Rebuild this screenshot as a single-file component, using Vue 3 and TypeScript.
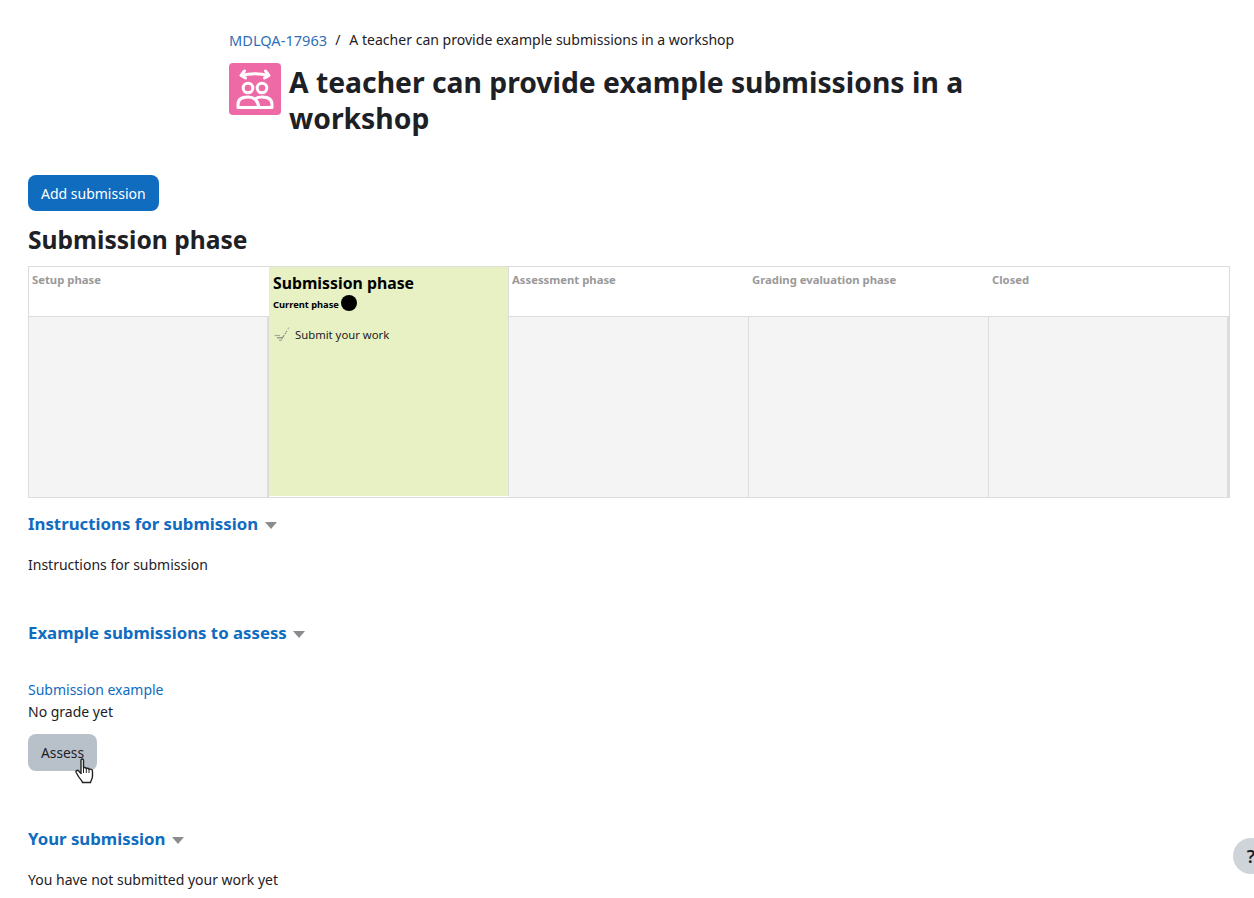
<script setup lang="ts">
type Phase = {
  title: string;
  current?: boolean;
};

const phases: Phase[] = [
  { title: 'Setup phase' },
  { title: 'Submission phase', current: true },
  { title: 'Assessment phase' },
  { title: 'Grading evaluation phase' },
  { title: 'Closed' },
];
</script>

<template>
  <div class="page">
    <header class="page-header">
      <nav class="crumbs">
        <a class="link">MDLQA-17963</a>
        <span class="crumbs__sep">/</span>
        <span class="crumbs__current">A teacher can provide example submissions in a workshop</span>
      </nav>
      <div class="title-row">
        <div class="activity-icon">
          <svg width="52" height="52" viewBox="0 0 52 52" fill="none" stroke="#fff" stroke-width="3" stroke-linecap="round" stroke-linejoin="round">
            <path d="M13 12.500 C20 10 32 10 39 12.500" />
            <path d="M15.500 8 L12 12.500 L16.500 15" />
            <path d="M36.500 8 L40 12.500 L35.500 15" />
            <circle cx="19" cy="25" r="4.800" />
            <circle cx="33" cy="25" r="4.800" />
            <path d="M9 44.500 V41.500 C9 36.500 13 34 19 34 C25 34 29 38 30 44.500 Z" />
            <path d="M27 35.500 C28.500 34.300 30.500 34 33 34 C39 34 43 36.500 43 41.500 V44.500 H30" />
          </svg>
        </div>
        <h1 class="title">A teacher can provide example submissions in a workshop</h1>
      </div>
    </header>

    <button class="btn btn--primary" type="button">Add submission</button>

    <h2 class="phase-heading">Submission phase</h2>

    <div class="planner">
      <div
        v-for="phase in phases"
        :key="phase.title"
        class="phase"
        :class="{ 'phase--active': phase.current }"
      >
        <div class="phase__head">
          <template v-if="phase.current">
            <div class="phase__title">{{ phase.title }}</div>
            <div class="phase__current">
              <span class="phase__label">Current phase</span>
              <span class="phase__dot"></span>
            </div>
          </template>
          <template v-else>{{ phase.title }}</template>
        </div>
        <div class="phase__body">
          <div v-if="phase.current" class="task">
            <svg class="task__icon" width="16" height="16" viewBox="0 0 16 16" fill="none" stroke="#8a8a8a" stroke-width="1.200">
              <path d="M0.500 8.500 H6" stroke="#a8a8a0" />
              <path d="M3 10.800 H9" />
              <path d="M5 13.300 H8" stroke="#a8a8a0" />
              <path d="M7.500 12 L10.300 8" />
              <path d="M11 6.800 L13 3.800" stroke-dasharray="1.500 0.800" />
              <path d="M13.800 2.200 L15 0.500" stroke="#b5b5ad" />
            </svg>
            <span>Submit your work</span>
          </div>
        </div>
      </div>
    </div>

    <section class="section section--instructions">
      <h3 class="section__title">Instructions for submission <span class="caret"></span></h3>
      <p class="section__text">Instructions for submission</p>
    </section>

    <section class="section section--examples">
      <h3 class="section__title">Example submissions to assess <span class="caret"></span></h3>
      <div class="example">
        <a class="link">Submission example</a>
        <div class="example__grade">No grade yet</div>
        <div class="example__action">
          <button class="btn btn--secondary" type="button">Assess</button>
          <svg class="pointer" width="20" height="26" viewBox="0 0 20 26">
            <path d="M6 2.200 C6 0.600 8.500 0.600 8.500 2.200 V10 C9.500 9.200 11 9.400 11.300 10.600 C12.300 9.800 13.800 10.200 14 11.400 C15.200 10.800 17.500 11.200 17.500 13.500 V18 C17.500 21 16 22 15.500 24.500 H7.500 C7 22.500 5 21 3.500 18.500 L1.200 14.500 C0.300 12.800 2.300 11.500 3.700 13 L6 15.500 Z" fill="#fff" stroke="#222" stroke-width="1.400" stroke-linejoin="round" />
            <path d="M8.500 10 V15 M11.300 10.600 V15 M14 11.400 V15" stroke="#222" stroke-width="1" fill="none" />
          </svg>
        </div>
      </div>
    </section>

    <section class="section section--yours">
      <h3 class="section__title">Your submission <span class="caret"></span></h3>
      <p class="section__text">You have not submitted your work yet</p>
    </section>

    <button class="help" type="button">?</button>
  </div>
</template>

<style>
html,
body {
  height: 100%;
  overflow: hidden;
  background: #fff;
}
</style>

<style scoped>
.page {
  padding: 0 24px 0 28px;
  font-family: 'Noto Sans', 'Open Sans', sans-serif;
  font-size: 14px;
  line-height: 22px;
  color: #1d2125;
}

.page-header {
  width: 760px;
  margin-left: 201px;
  padding-top: 29px;
}

.crumbs {
  display: flex;
  gap: 8px;
}

.crumbs__current {
  margin-left: 1px;
  font-size: 14.050px;
}

.link {
  color: #0f6cbf;
  text-decoration: none;
}

.crumbs .link {
  font-size: 14.600px;
  color: #2f6fb7;
}

.title-row {
  display: flex;
  gap: 8px;
  margin-top: 12px;
}

.activity-icon {
  display: flex;
  flex: none;
  align-items: center;
  justify-content: center;
  width: 52px;
  height: 52px;
  border-radius: 4px;
  background: #ee6aa7;
}

.title {
  margin: 1px 0 0;
  font-size: 28.300px;
  font-weight: 700;
  line-height: 36px;
}

.btn {
  display: block;
  border: 0;
  border-radius: 8px;
  padding: 0 13px;
  height: 36px;
  font: inherit;
}

.btn--primary {
  margin-top: 39px;
  line-height: 37px;
  color: #fff;
  background: #0f6cbf;
}

.btn--secondary {
  height: 37px;
  font-size: 13.800px;
  color: #1d2125;
  background: #b8c0ca;
}

.phase-heading {
  margin: 10px 0 0;
  font-size: 24.600px;
  font-weight: 700;
  line-height: 38px;
}

.planner {
  display: grid;
  grid-template-columns: repeat(5, 1fr);
  width: 1202px;
  height: 232px;
  box-sizing: border-box;
  margin-top: 7px;
  border: 1px solid #dcdcdc;
}

.phase {
  display: flex;
  flex-direction: column;
}

.phase__head {
  box-sizing: border-box;
  height: 50px;
  padding: 3px;
  border-bottom: 1px solid #dcdcdc;
  font-size: 11.300px;
  font-weight: 700;
  line-height: 20px;
  color: #999;
}

.phase__body {
  flex: 1;
  border-right: 1px solid #dcdcdc;
  background: #f4f4f4;
}

.phase:first-child .phase__body {
  border-right-width: 2px;
}

.phase:last-child .phase__body {
  border-right-width: 2px;
}

.phase--active {
  height: 229px;
  border-right: 1px solid #dcdcdc;
  background: #e7f1c3;
}

.phase--active .phase__head {
  height: auto;
  min-height: 50px;
  padding-left: 4px;
  border-bottom: 0;
  color: #000;
}

.phase--active .phase__body {
  border-right: 0;
  background: transparent;
}

.phase__title {
  font-size: 15.800px;
  line-height: 26px;
}

.phase__current {
  display: flex;
  align-items: center;
  gap: 2px;
  height: 16px;
  margin-top: -1px;
  font-size: 9.300px;
  line-height: 16px;
}

.phase__label {
  transform: translateY(2px);
}

.phase__dot {
  width: 16px;
  height: 16px;
  border-radius: 50%;
  background: #000;
}

.task {
  display: flex;
  align-items: center;
  gap: 5px;
  padding: 7px 0 0 5px;
  font-size: 11.300px;
  line-height: 22px;
}

.task__icon {
  flex: none;
}

.section__title {
  margin: 0;
  font-size: 16.800px;
  font-weight: 700;
  line-height: 24px;
  color: #0f6cbf;
}

.caret {
  display: inline-block;
  margin-left: 2px;
  vertical-align: middle;
  border-top: 7px solid #8a8d90;
  border-left: 6px solid transparent;
  border-right: 6px solid transparent;
}

.section__text {
  margin: 0;
}

.section--instructions {
  margin-top: 14px;
}

.section--instructions .section__text {
  margin-top: 18px;
}

.section--examples {
  margin-top: 45px;
}

.example {
  margin-top: 34px;
}

.example__action {
  position: relative;
  width: fit-content;
  margin-top: 11px;
}

.pointer {
  position: absolute;
  left: 47px;
  top: 24px;
}

.section--yours {
  margin-top: 56px;
}

.section--yours .section__text {
  margin-top: 18px;
}

.help {
  position: fixed;
  left: 1233px;
  top: 838px;
  width: 36px;
  height: 36px;
  padding: 0;
  border: 0;
  border-radius: 50%;
  font-size: 18px;
  font-weight: 600;
  font-family: inherit;
  color: #1d2125;
  background: #ced4da;
}
</style>
